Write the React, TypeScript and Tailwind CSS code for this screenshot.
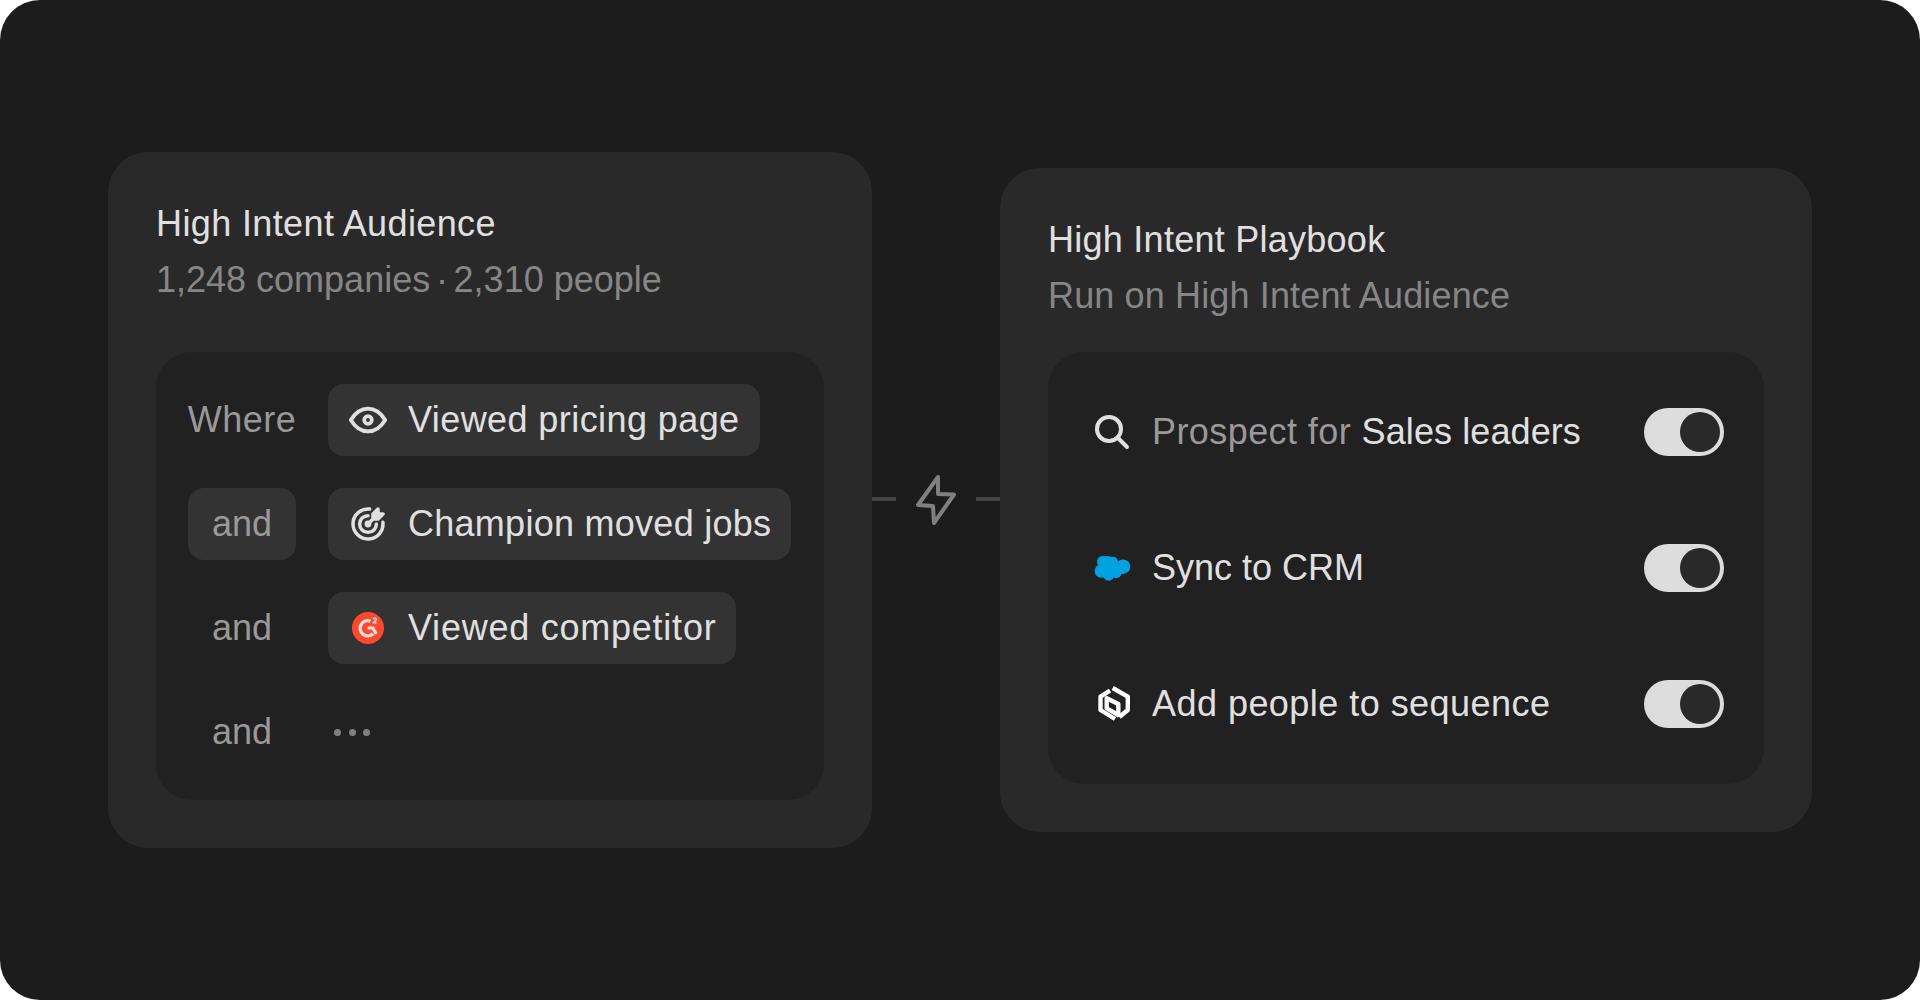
import React from "react";

const font = { fontFamily: '"Liberation Sans", Arial, sans-serif' };

function Eye() {
  return (
    <svg width="40" height="40" viewBox="1.5 1.5 21 21" fill="none" stroke="#e0e0e0" strokeWidth="2" strokeLinecap="round" strokeLinejoin="round">
      <path d="M10 12a2 2 0 1 0 4 0a2 2 0 0 0 -4 0" />
      <path d="M21 12c-2.4 4 -5.4 6 -9 6c-3.6 0 -6.6 -2 -9 -6c2.4 -4 5.4 -6 9 -6c3.6 0 6.6 2 9 6" />
    </svg>
  );
}

function Target() {
  return (
    <svg width="40" height="40" viewBox="0 0 24 24" fill="none" stroke="#e0e0e0" strokeWidth="2.1" strokeLinecap="round" strokeLinejoin="round">
      <path d="M12 12m-1 0a1 1 0 1 0 2 0a1 1 0 1 0 -2 0" />
      <path d="M12 7a5 5 0 1 0 5 5" />
      <path d="M13 3.055a9 9 0 1 0 7.941 7.945" />
      <path d="M15 6v3h3l3 -3h-3v-3z" fill="#e0e0e0" />
      <path d="M15 9l-3 3" />
    </svg>
  );
}

function G2() {
  return (
    <svg width="40" height="40" viewBox="0 0 40 40" fill="none">
      <circle cx="20" cy="20" r="16" fill="#ff492c" />
      <path d="M22.5 13.2a7.6 7.6 0 1 0 2.6 12.6" stroke="#e0e0e0" strokeWidth="3.4" fill="none" />
      <path d="M19.5 20h5.5l3.2 6" stroke="#e0e0e0" strokeWidth="3.2" fill="none" />
      <path d="M25.4 11.4c0.2-1.8 3-1.8 3 0c0 1.2-2.4 2-3 3.4h3.2" stroke="#e0e0e0" strokeWidth="1.4" fill="none" />
    </svg>
  );
}

function Bolt() {
  return (
    <svg width="48" height="56" viewBox="0 0 48 56" fill="none" stroke="#808080" strokeWidth="4" strokeLinecap="round" strokeLinejoin="round">
      <path d="M26 5 L26 22 L42 22.5 L22 51 L21 34 L6 33 Z" />
    </svg>
  );
}

function Search() {
  return (
    <svg width="40" height="40" viewBox="0 0 40 40" fill="none" stroke="#e0e0e0" strokeWidth="4" strokeLinecap="round">
      <circle cx="17" cy="17" r="12" />
      <path d="M25.5 25.5 L35 35" />
    </svg>
  );
}

function Cloud() {
  return (
    <svg width="40" height="40" viewBox="0 0 40 40" fill="#00a1e0">
      <circle cx="9.3" cy="23" r="6.7" />
      <circle cx="11" cy="13.7" r="6" />
      <circle cx="16" cy="14" r="6" />
      <circle cx="21" cy="13.7" r="5" />
      <circle cx="31" cy="18.7" r="7.3" />
      <circle cx="16.7" cy="27" r="5.7" />
      <circle cx="24.3" cy="25.3" r="5" />
      <rect x="8" y="14" width="22" height="12" />
    </svg>
  );
}

function Hex() {
  return (
    <svg width="40" height="40" viewBox="0 0 40 40" fill="none" stroke="#ffffff" strokeWidth="4.4" strokeLinejoin="round">
      <path d="M18 6.7 L8.5 12.7 V26 L23 35" />
      <path d="M20.7 4 L35.8 12.7 V26 L27.3 33" />
      <path d="M14.7 14.3 L26.3 20 V31 L14.7 24.3 Z" />
    </svg>
  );
}

function Chip({ icon, label, tracking }: { icon: React.ReactNode; label: string; tracking: string }) {
  return (
    <div className="flex h-[72px] items-center gap-[20px] rounded-[16px] bg-[#333333] px-[20px] text-[#e0e0e0]">
      {icon}
      <span className={tracking}>{label}</span>
    </div>
  );
}

function Word({ text, filled, tracking }: { text: string; filled?: boolean; tracking?: string }) {
  return (
    <div className={`flex h-[72px] w-[108px] items-center justify-center rounded-[16px] text-[#999999] ${filled ? "bg-[#333333]" : ""} ${tracking ?? ""}`}>
      {text}
    </div>
  );
}

function Toggle() {
  return (
    <div className="flex h-[48px] w-[80px] shrink-0 items-center justify-end rounded-full bg-[#dcdcdc] pr-[4px]">
      <div className="h-[40px] w-[40px] rounded-full bg-[#292929]" />
    </div>
  );
}

function Row({ icon, children }: { icon: React.ReactNode; children: React.ReactNode }) {
  return (
    <div className="flex h-[48px] items-center gap-[20px]">
      {icon}
      <div className="flex-1 text-[#e0e0e0]">{children}</div>
      <Toggle />
    </div>
  );
}

export default function App() {
  return (
    <div className="h-[1000px] w-[1920px] bg-white text-[36px] leading-[48px]" style={font}>
      <div className="flex h-full items-center rounded-[40px] bg-[#1c1c1c] px-[108px]">
        <div className="flex w-[764px] shrink-0 flex-col gap-[48px] rounded-[40px] bg-[#292929] p-[48px]">
          <div className="flex flex-col gap-[8px]">
            <div className="tracking-[0.38px] text-[#e0e0e0]">High Intent Audience</div>
            <div className="text-[#868686]">
              1,248 companies<span className="[word-spacing:-4.3px]"> · </span>2,310 people
            </div>
          </div>
          <div className="flex flex-col gap-[32px] rounded-[36px] bg-[#212121] p-[32px]">
            <div className="flex items-center gap-[32px]">
              <Word text="Where" tracking="tracking-[0.5px]" />
              <Chip icon={<Eye />} label="Viewed pricing page" tracking="tracking-[0.42px]" />
            </div>
            <div className="flex items-center gap-[32px]">
              <Word text="and" filled />
              <Chip icon={<Target />} label="Champion moved jobs" tracking="tracking-[0.27px]" />
            </div>
            <div className="flex items-center gap-[32px]">
              <Word text="and" />
              <Chip icon={<G2 />} label="Viewed competitor" tracking="tracking-[0.76px]" />
            </div>
            <div className="flex items-center gap-[32px]">
              <Word text="and" />
              <div className="flex items-center gap-[7.5px] pl-[6px]">
                <span className="h-[7px] w-[7px] rounded-full bg-[#808080]" />
                <span className="h-[7px] w-[7px] rounded-full bg-[#808080]" />
                <span className="h-[7px] w-[7px] rounded-full bg-[#808080]" />
              </div>
            </div>
          </div>
        </div>

        <div className="flex w-[128px] shrink-0 items-center justify-between">
          <div className="mb-[3px] h-[4px] w-[24px] bg-[#444444]" />
          <Bolt />
          <div className="mb-[3px] h-[4px] w-[24px] bg-[#444444]" />
        </div>

        <div className="flex w-[812px] shrink-0 flex-col gap-[32px] rounded-[40px] bg-[#292929] p-[48px]">
          <div className="flex flex-col gap-[8px]">
            <div className="tracking-[0.26px] text-[#e0e0e0]">High Intent Playbook</div>
            <div className="tracking-[0.14px] text-[#868686]">Run on High Intent Audience</div>
          </div>
          <div className="flex flex-col gap-[88px] rounded-[36px] bg-[#212121] py-[56px] pl-[44px] pr-[40px]">
            <Row icon={<Search />}>
              <span className="tracking-[0.42px] text-[#999999]">Prospect for </span>
              <span className="tracking-[0.1px]">Sales leaders</span>
            </Row>
            <Row icon={<Cloud />}>Sync to CRM</Row>
            <Row icon={<Hex />}>
              <span className="tracking-[0.46px]">Add people to sequence</span>
            </Row>
          </div>
        </div>
      </div>
    </div>
  );
}
